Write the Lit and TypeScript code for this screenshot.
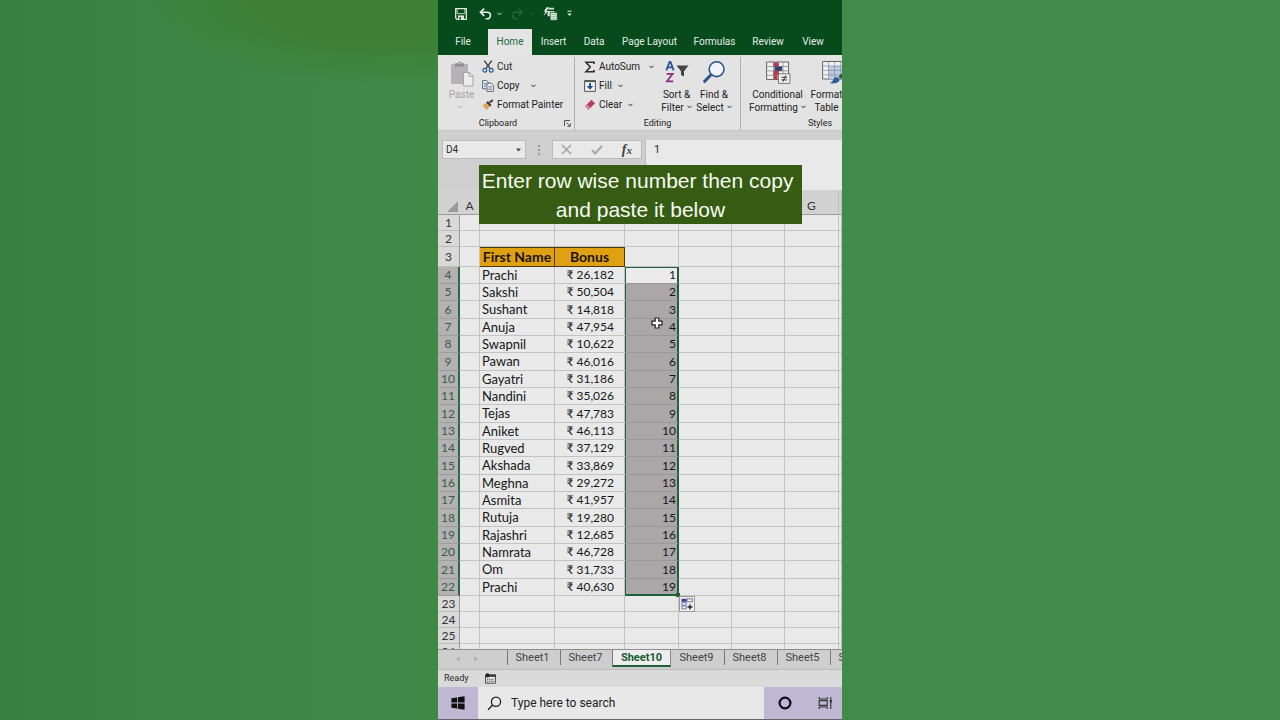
import { LitElement, html, css, svg, nothing } from "lit";
import { customElement, state } from "lit/decorators.js";
import { classMap } from "lit/directives/class-map.js";

const chevron = html`<svg class="chev" width="5" height="4" viewBox="0 0 5 4" aria-hidden="true">
  <path d="M.5 .8 2.5 2.8 4.5 .8" fill="none" stroke="currentColor" stroke-width="1" />
</svg>`;

const icon = (w: number, h: number, body: unknown) =>
  html`<svg width=${w} height=${h} viewBox="0 0 ${w} ${h}" aria-hidden="true">${body}</svg>`;

const icons = {
  save: icon(12, 12, svg`<path d="M.7 .7h10.6v10.6H1.9L.7 10.1z" fill="none" stroke="#dfe9e0" stroke-width="1.3"/>
    <path d="M2.2 1v4.6h7.6V1" fill="none" stroke="#dfe9e0" stroke-width=".8"/>
    <path d="M3 7.4h6v4H3z" fill="#dfe9e0"/><path d="M4.3 9h1.6v2.4H4.3z" fill="#084a1d"/>`),
  undo: icon(13, 12, svg`<path d="M2 4.2h6.2a3.3 3.3 0 0 1 0 6.6H6.6" fill="none" stroke="#e6efe7" stroke-width="1.6"/>
    <path d="M5.2 .6 1.5 4.2l3.7 3.6" fill="none" stroke="#e6efe7" stroke-width="1.7"/>`),
  redo: icon(13, 12, svg`<path d="M11 4.2H4.8a3.3 3.3 0 0 0 0 6.6h1.6" fill="none" stroke="#2a6339" stroke-width="1.4"/>
    <path d="M7.8 .8l3.5 3.4-3.5 3.4" fill="none" stroke="#2a6339" stroke-width="1.4"/>`),
  quick: icon(15, 14, svg`<path d="M3.6 .3 .8 4.6h1.8L.6 8.8 5.2 4H3.5L6 .3z" fill="#e6efe7"/>
    <path d="M5.6 .8h5.4v1.8h-6zM4.5 3.9h7v5.4h-7z" fill="#d3e0d6"/>
    <path d="M7.2 5.4h7v7.9h-7z" fill="#e6efe7" stroke="#084a1d" stroke-width=".7"/>
    <path d="M8.4 7.4h4.6M8.4 9.4h4.6M8.4 11.4h4.6" stroke="#7d9f86" stroke-width=".7"/>`),
  custom: icon(5, 7, svg`<path d="M.5 1.2h4" stroke="#e6efe7"/><path d="M.3 3.4h4.4L2.5 6z" fill="#e6efe7"/>`),
  paste: icon(24, 27, svg`<path d="M1 4h17v20H1z" fill="#b5b1b6"/>
    <path d="M5 3.2h2.2a2.4 2.4 0 0 1 4.6 0H14V6.6H5z" fill="#8f8c91"/><circle cx="9.5" cy="3.2" r=".9" fill="#e3e3e3"/>
    <path d="M13.5 12.5h6l3.5 3.6v9.9h-9.5z" fill="#ececec" stroke="#a7a3a8"/><path d="M19.2 12.7v3.8h3.8" fill="none" stroke="#a7a3a8"/>`),
  cut: icon(12, 13, svg`<path d="M2.2 .6 8.3 8.6M9.8 .6 3.7 8.6" stroke="#3f4245" stroke-width="1.5"/>
    <circle cx="2.8" cy="10.2" r="1.9" fill="none" stroke="#2d5e94" stroke-width="1.2"/>
    <circle cx="9.2" cy="10.2" r="1.9" fill="none" stroke="#2d5e94" stroke-width="1.2"/>`),
  copy: icon(12, 12, svg`<path d="M.6 .6h4l2 2v6.2h-6z" fill="#eee" stroke="#555b63" stroke-width=".9"/>
    <path d="M1.8 3.4h3M1.8 5h3M1.8 6.6h2" stroke="#3f6ea3" stroke-width=".7"/>
    <path d="M5 3.2h4.2l2.2 2.2v6H5z" fill="#f2f2f2" stroke="#555b63" stroke-width=".9"/>
    <path d="M6.3 6.4h3.6M6.3 8h3.6M6.3 9.6h3.6" stroke="#3f6ea3" stroke-width=".7"/>`),
  painter: icon(12, 12, svg`<path d="M.6 6 5 3.4 8 6.8 5 11C3.4 9.8 1.6 8.4 .6 6z" fill="#dfa55b"/>
    <path d="M4.2 3.4 6 2l3.6 4.2-1.7 1.4z" fill="#3d3a39"/><path d="M7.8 3.6 10.8 1" stroke="#3d3a39" stroke-width="2"/>`),
  sum: icon(12, 12, svg`<path d="M10 3V1.3H2L6.2 6 2 10.7h8V9" fill="none" stroke="#2f2f2f" stroke-width="1.6"/>`),
  fill: icon(12, 12, svg`<path d="M.6 .6h10.8v10.8H.6z" fill="#efefef" stroke="#555" stroke-width="1"/>
    <path d="M.6 1.4h10.8" stroke="#555" stroke-width="1.4"/><path d="M6 3v4.4" stroke="#1f4f8a" stroke-width="1.9"/>
    <path d="M2.8 6 6 9.8 9.2 6z" fill="#1f4f8a"/>`),
  clear: icon(12, 12, svg`<path d="M7.4 .8 11 4.2 4.6 10.8 1 7.2z" fill="#b8405f"/>
    <path d="M2.9 5.3 6.5 8.9 4.6 10.8 1 7.2z" fill="#d98aa0"/>`),
  sort: icon(24, 24, svg`<path d="M1.4 10.4 4.5 1.8h1l3.1 8.6M2.6 7.4h4.8" fill="none" stroke="#2c5697" stroke-width="1.8"/>
    <path d="M1.6 13.9h6L2 21.3h6.2" fill="none" stroke="#8a2f84" stroke-width="1.8"/>
    <path d="M11.5 5.5h12L19 11.2v5.4l-3-1.6v-3.8z" fill="#454545"/>`),
  find: icon(24, 24, svg`<circle cx="14.6" cy="9.2" r="7.4" fill="#f1f4f8" stroke="#2b538f" stroke-width="1.6"/>
    <path d="M9 14.8 1.8 22.2" stroke="#2b538f" stroke-width="3"/>`),
  conditional: icon(26, 24, svg`<path d="M1.6 2h22v17.5h-22z" fill="#f2f2f2" stroke="#666"/>
    <path d="M1.6 6.5h22M1.6 10.9h22M1.6 15.3h22M8.5 2v17.5M18 2v17.5" stroke="#8a8a8a" stroke-width=".8"/>
    <path d="M8.5 2.4h5.4v4H8.5zM8.5 10.9h5.4v4.2H8.5zM8.5 15.3h4v4h-4z" fill="#b23a4a"/><path d="M9.5 6.5h7.6v4.4H9.5z" fill="#33406f"/>
    <path d="M13.5 13.8h11.4v9.6H13.5z" fill="#f4f4f4" stroke="#777"/>
    <path d="M16.4 17.3h5.8M16.4 19.9h5.8M20.8 15.4l-3 6.4" stroke="#333" stroke-width="1"/>`),
  table: icon(28, 24, svg`<path d="M.6 1.5h24v17.5H.6z" fill="#f2f2f2" stroke="#666"/>
    <path d="M6.6 6h18v13h-18z" fill="#b8cce4"/><path d="M.6 6h24M.6 10.4h24M.6 14.8h24M6.6 1.5V19M12.6 1.5V19M18.6 1.5V19" stroke="#8a93a3" stroke-width=".8"/>
    <path d="M16.5 16.5 24 9.5l1.5 1.6-7 8z" fill="#484848"/><path d="M7.5 23c3-.6 3.4-2.4 4.4-4.4 2-2.4 6-1 5.6 1.4-.5 2.8-5.6 4.2-10 3z" fill="#2d5d9d"/>`),
  launcher: icon(7, 7, svg`<path d="M.5 6V.5H6" fill="none" stroke="#555"/><path d="M2.6 2.6 6 6M6.3 3.4v3H3.4" fill="none" stroke="#555"/>`),
  cancel: icon(11, 11, svg`<path d="M1 1l9 9M10 1 1 10" stroke="#a3a3a3" stroke-width="1.5"/>`),
  accept: icon(12, 10, svg`<path d="M1 5.2 4.2 8.4 11 1" fill="none" stroke="#a8a8a8" stroke-width="2.2"/>`),
  fillOptions: icon(12, 12, svg`<path d="M.5 .8h5v3h-5z" fill="#3b3f8c"/><path d="M6 .8h5.4v3H6z" fill="#f2f2f2" stroke="#3b3f8c" stroke-width=".7"/>
    <path d="M.8 4.6h4.4v2.6H.8zM.8 8h4.4v2.8H.8z" fill="#f2f2f2" stroke="#5b609c" stroke-width=".8"/>
    <path d="M9 6.4v5M6.5 8.9h5" stroke="#2a2a2a" stroke-width="1.5"/>`),
  cursor: icon(12, 12, svg`<path d="M4.2 1h3.6v3.2H11v3.6H7.8V11H4.2V7.8H1V4.2h3.2z" fill="#fff" stroke="#222" stroke-width="1.2"/>`),
  macro: icon(11, 11, svg`<path d="M.6 2.4h9.8v7.8H.6z" fill="#eee" stroke="#444"/><path d="M4 1.4h6.9v2.4H4z" fill="#333"/>
    <circle cx="2.4" cy="2.4" r="2.1" fill="#222"/><path d="M2 6.2h7M2 8.2h7" stroke="#444" stroke-width="1" stroke-dasharray="1.4 .7"/>`),
  windows: icon(14, 14, svg`<path d="M.4 2.2 6 1.4v5.2H.4zM6.8 1.3 13.6 .3v6.3H6.8zM.4 7.4H6v5.2L.4 11.8zM6.8 7.4h6.8v6.3l-6.8-1z" fill="#111"/>`),
  search: icon(15, 15, svg`<circle cx="9" cy="5.8" r="4.6" fill="none" stroke="#222" stroke-width="1.3"/>
    <path d="M5.7 9.1 1 13.8" stroke="#222" stroke-width="1.4"/>`),
  cortana: icon(14, 14, svg`<circle cx="7" cy="7" r="5.4" fill="none" stroke="#0d0d14" stroke-width="2.2"/>`),
  taskview: icon(15, 14, svg`<path d="M1.2 1v2h8V1M1.2 13v-2h8v2M1.2 4.6h8v4.8h-8z" fill="none" stroke="#333" stroke-width="1.1"/>
    <path d="M12.8 1v12" stroke="#333" stroke-width="1.1"/><path d="M11.8 4h2v2.6h-2z" fill="#333"/>`),
};

const ribbonTabs = ["File", "Home", "Insert", "Data", "Page Layout", "Formulas", "Review", "View"];

const people: [string, string][] = [
  ["Prachi", "26,182"], ["Sakshi", "50,504"], ["Sushant", "14,818"], ["Anuja", "47,954"],
  ["Swapnil", "10,622"], ["Pawan", "46,016"], ["Gayatri", "31,186"], ["Nandini", "35,026"],
  ["Tejas", "47,783"], ["Aniket", "46,113"], ["Rugved", "37,129"], ["Akshada", "33,869"],
  ["Meghna", "29,272"], ["Asmita", "41,957"], ["Rutuja", "19,280"], ["Rajashri", "12,685"],
  ["Namrata", "46,728"], ["Om", "31,733"], ["Prachi", "40,630"],
];

const sheets = ["Sheet1", "Sheet7", "Sheet10", "Sheet9", "Sheet8", "Sheet5", "Sheet4"];

const reset = css`
  * { box-sizing: border-box; }
  svg { display: block; flex: none; }
  button, input, textarea {
    font: inherit; color: inherit; background: none; border: 0; border-radius: 0;
    margin: 0; padding: 0; outline: none;
  }
  button { white-space: nowrap; }
`;

@customElement("excel-ribbon")
export class ExcelRibbon extends LitElement {
  @state() private active = "Home";

  static styles = [reset, css`
    :host { display: block; font: 10px/13px Roboto, "Open Sans", sans-serif; color: #222; }
    .title { display: flex; align-items: center; height: 29px; padding: 0 17px 2px; background: #074a1c; color: #dbe7dd; }
    .title button { display: flex; align-items: center; gap: 5px; margin-right: 9px; }
    .title .save { margin-right: 12px; }
    .title .faded { color: #2a6339; }
    .tabs { display: grid; grid-template-columns: 50px 44px 43px 38px 73px 57px 50px 40px; height: 26px; background: #074a1c; }
    .tab { color: #e3ede5; text-align: center; padding-bottom: 2px; }
    .tab.on { background: #e4e4e4; color: #1c6b3c; }
    .body { display: flex; height: 76px; background: #e3e3e3; border-bottom: 1px solid #c4c4c4; overflow: hidden; }
    .group { display: flex; flex-direction: column; flex: none; border-right: 1px solid #b0b0b0; margin: 2px 0 0; }
    .clip { width: 137px; }
    .edit { width: 166px; }
    .styles { width: 158px; border: 0; }
    .tools { display: flex; flex: none; height: 60px; }
    .caption { display: flex; justify-content: center; position: relative; height: 13px; font-size: 9px; }
    .clip .caption { padding-right: 16px; }
    .launch { position: absolute; right: 3px; top: 3px; }
    .big { display: flex; flex-direction: column; align-items: center; padding-top: 3px; }
    .big svg { margin-bottom: 4px; }
    .big .chev { display: inline; margin: 0 0 2px 3px; }
    .paste { width: 44px; color: #a6a2a7; padding-left: 3px; }
    .paste svg { margin-bottom: 1px; }
    .paste .chev { margin: 4px 3px 0 0; }
    .rows { display: flex; flex-direction: column; }
    .rows button { display: flex; align-items: center; height: 19px; gap: 3px; }
    .rows .chev { margin-left: 3px; }
    .copy .chev { margin-left: 8px; }
    .sum .chev { margin-left: 6px; }
    .edit .rows { padding-left: 9px; width: 83px; }
    .sort { width: 37px; }
    .find { width: 38px; }
    .cond { width: 73px; }
    .fmt { width: 25px; }
    .fmt svg { margin-left: 18px; }
  `];

  render() {
    return html`
      <div class="title">
        <button class="save" aria-label="Save">${icons.save}</button>
        <button aria-label="Undo">${icons.undo}${chevron}</button>
        <button class="faded" aria-label="Redo">${icons.redo}${chevron}</button>
        <button aria-label="Quick tools">${icons.quick}</button>
        <button aria-label="Customize toolbar">${icons.custom}</button>
      </div>
      <div class="tabs" role="tablist">
        ${ribbonTabs.map((t) => html`<button role="tab" class=${classMap({ tab: true, on: t === this.active })}
          aria-selected=${t === this.active} @click=${() => (this.active = t)}>${t}</button>`)}
      </div>
      <div class="body">
        <div class="group clip">
          <div class="tools">
            <button class="big paste">${icons.paste}<span>Paste</span>${chevron}</button>
            <div class="rows">
              <button>${icons.cut}Cut</button>
              <button class="copy">${icons.copy}Copy${chevron}</button>
              <button>${icons.painter}Format Painter</button>
            </div>
          </div>
          <div class="caption">Clipboard<button class="launch" aria-label="Clipboard options">${icons.launcher}</button></div>
        </div>
        <div class="group edit">
          <div class="tools">
            <div class="rows">
              <button class="sum">${icons.sum}AutoSum${chevron}</button>
              <button>${icons.fill}Fill${chevron}</button>
              <button>${icons.clear}Clear${chevron}</button>
            </div>
            <button class="big sort">${icons.sort}<span>Sort &amp;</span><span>Filter${chevron}</span></button>
            <button class="big find">${icons.find}<span>Find &amp;</span><span>Select${chevron}</span></button>
          </div>
          <div class="caption">Editing</div>
        </div>
        <div class="group styles">
          <div class="tools">
            <button class="big cond">${icons.conditional}<span>Conditional</span><span>Formatting${chevron}</span></button>
            <button class="big fmt">${icons.table}<span>Format</span><span>Table</span></button>
          </div>
          <div class="caption">Styles</div>
        </div>
      </div>`;
  }
}

@customElement("excel-grid")
export class ExcelGrid extends LitElement {
  static styles = [reset, css`
    :host { display: block; overflow: hidden; background: #e9e9e9; font: 13px/16px Lato, "Open Sans", sans-serif; color: #161616; }
    table { width: 100%; table-layout: fixed; border-collapse: separate; border-spacing: 0; }
    .c-head { width: 22px; } .c-a { width: 20px; } .c-b { width: 75px; } .c-c { width: 70px; } .c-d { width: 54px; } .c-e { width: 53px; }
    th, td { padding: 0; height: 16px; line-height: 15px; font-weight: 400; white-space: nowrap; overflow: hidden;
      border-right: 1px solid #c3c3c3; border-bottom: 1px solid #c3c3c3; }
    thead th { height: 25px; background: #d2d2d2; vertical-align: bottom; line-height: 16px; font-size: 12px;
      border-bottom-color: #9c9c9c; border-right-color: #bdbdbd; color: #333; }
    thead .corner { padding: 0 2px 2px 9px; border-right-color: #d2d2d2; }
    tbody th { background: #d9d9d9; color: #333; font-size: 12px; border-right-color: #9c9c9c; border-bottom-color: #bdbdbd; }
    .tall td, .tall th { height: 20px; line-height: 19px; }
    .tall .field { line-height: 18px; }
    .data td, .data th { height: 17px; line-height: 16px; }
    .data:nth-child(3n) td, .data:nth-child(3n) th { height: 18px; line-height: 17px; }
    .data th { background: #b3b1b2; border-right: 2px solid #2a6a45; color: #3d5a48; border-bottom-color: #9d9d9d; }
    .name { padding-left: 2px; }
    .money { font-size: 12px; text-align: right; padding-right: 10px; }
    .field { background: #dfa012; border: 1px solid #4a3a14; border-left-width: 0; font-weight: 700; font-size: 14px; text-align: center; color: #1a1407; }
    .seq { font-size: 12px; text-align: right; padding-right: 1px; background: #aba7a8; border-right: 2px solid #1f6038;
      border-bottom-color: #9b9799; box-shadow: inset 1px 0 #1f6038; }
    .first .seq { background: #ececec; box-shadow: inset 1px 1px #1f6038; }
    .data.last .seq { border-bottom: 2px solid #1f6038; overflow: visible; position: relative; line-height: 15px; }
    .handle { position: absolute; right: -3px; bottom: -3px; width: 4px; height: 4px; background: #1f6038; }
    .options { position: absolute; left: 54px; top: 17px; width: 16px; height: 16px; padding: 1px; background: #efefef; border: 1px solid #9a9a9a; }
    .hover { overflow: visible; position: relative; }
    .pointer { position: absolute; left: 26px; top: -2px; }
  `];

  private blanks(n: number) {
    return Array.from({ length: n }, () => html`<td></td>`);
  }

  private blankRow(n: number) {
    return html`<tr><th scope="row">${n}</th>${this.blanks(8)}</tr>`;
  }

  render() {
    const last = people.length - 1;
    return html`
      <table>
        <colgroup>
          <col class="c-head" /><col class="c-a" /><col class="c-b" /><col class="c-c" /><col class="c-d" />
          <col class="c-e" /><col class="c-e" /><col class="c-d" /><col />
        </colgroup>
        <thead>
          <tr>
            <th class="corner">${icon(11, 11, svg`<path d="M11 0v11H0z" fill="#9b9b9b"/>`)}</th>
            <th scope="col">A</th><th></th><th></th><th></th><th></th><th></th><th scope="col">G</th><th></th>
          </tr>
        </thead>
        <tbody>
          ${this.blankRow(1)}${this.blankRow(2)}
          <tr class="tall">
            <th scope="row">3</th><td></td><td class="field">First Name</td><td class="field">Bonus</td>${this.blanks(5)}
          </tr>
          ${people.map(([name, bonus], i) => html`
            <tr class=${classMap({ data: true, first: i === 0, last: i === last })}>
              <th scope="row">${i + 4}</th><td></td>
              <td class="name">${name}</td>
              <td class="money">₹ ${bonus}</td>
              <td class=${classMap({ seq: true, hover: i === 3 })}>${i + 1}${i === 3
                ? html`<span class="pointer">${icons.cursor}</span>` : nothing}${i === last
                ? html`<span class="handle"></span><button class="options" aria-label="Auto fill options">${icons.fillOptions}</button>` : nothing}</td>
              ${this.blanks(4)}
            </tr>`)}
          ${[23, 24, 25, 26].map((n) => this.blankRow(n))}
        </tbody>
      </table>`;
  }
}

@customElement("app-root")
export class AppRoot extends LitElement {
  @state() private sheet = "Sheet10";

  static styles = [reset, css`
    :host {
      display: flex; justify-content: center; height: 100vh; overflow: hidden;
      font: 10px/13px Roboto, "Open Sans", sans-serif; color: #2c2c2c;
      background:
        radial-gradient(ellipse 18% 12% at 29% 0, #3d7f33 45%, #3d7f3300 100%),
        linear-gradient(90deg, #37803f 0, #40884a 26%, #3f8846 34%, #438b4b 75%);
    }
    .window { display: flex; flex-direction: column; position: relative; width: 100%; max-width: 404px; background: #d0d0d0; }
    .formula { display: flex; height: 59px; padding: 9px 0 0 4px; background: #cfcfcf; }
    .namebox { display: flex; align-items: center; width: 84px; height: 19px; padding: 0 4px 0 3px; background: #e9e9e9; border: 1px solid #bbb; }
    .namebox input { width: 100%; }
    .grip { width: 26px; height: 19px; padding: 5px 12px; }
    .actions { display: flex; align-items: center; justify-content: space-between; width: 90px; height: 19px; padding: 0 9px 0 8px; background: #e9e9e9; border: 1px solid #bbb; }
    .fx { font: italic 700 14px/16px "Liberation Serif", serif; color: #444; }
    .fx small { font-size: 11px; }
    .value { flex: 1; min-width: 0; margin-left: 3px; height: 50px; padding: 3px 8px; resize: none; overflow: hidden; background: #e9e9e9; border-left: 1px solid #bbb; font-size: 11px; }
    .banner { position: absolute; left: 41px; right: 40px; top: 165px; margin: 0; padding-top: 1px; height: 59px; background: #355c12;
      color: #f7fbf2; font: 21px/29px "Liberation Sans", Arial, sans-serif; text-align: center; }
    .grid { flex: 1; min-height: 0; }
    .sheets { display: flex; height: 20px; border-top: 1px solid #8e8e8e; background: #cecece; font-size: 11px; overflow: hidden; }
    .nav { display: flex; align-items: center; gap: 14px; width: 69px; padding: 0 0 2px 18px; flex: none; }
    .sheet { flex: none; width: 53px; height: 15px; padding-right: 3px; border-left: 1px solid #777; color: #444; }
    .sheet.on { width: 59px; height: 17px; margin-left: -1px; padding: 0; font-weight: 700; color: #175c31; background: #ededed; border-bottom: 2px solid #1f6038; border-right: 1px solid #888; }
    .sheet.on + .sheet { border-left-color: transparent; }
    .status { display: flex; align-items: center; gap: 16px; height: 18px; padding: 0 6px 1px; background: #dadada; border-top: 1px solid #bbb; font-size: 9px; }
    .taskbar { display: flex; height: 33px; background: #beb8d5; border-bottom: 1px solid #666; }
    .start { width: 40px; padding-left: 13px; }
    .search { display: flex; align-items: center; flex: 1; min-width: 0; gap: 9px; padding-left: 9px; background: #e8e8e8; font: 12px/16px Roboto, "Open Sans", sans-serif; }
    .search input { width: 100%; }
    .search input::placeholder { color: #222; opacity: 1; }
    .tray { display: flex; align-items: center; gap: 26px; width: 78px; padding-left: 14px; }
  `];

  render() {
    return html`
      <main class="window">
        <excel-ribbon></excel-ribbon>
        <div class="formula">
          <label class="namebox"><input aria-label="Name box" value="D4" />
            ${icon(5, 4, svg`<path d="M0 .5h5L2.5 3.5z" fill="#444"/>`)}</label>
          <div class="grip">${icon(2, 10, svg`<path d="M0 0h2v2H0zM0 4h2v2H0zM0 8h2v2H0z" fill="#9a9a9a"/>`)}</div>
          <div class="actions">
            <button aria-label="Cancel">${icons.cancel}</button>
            <button aria-label="Enter">${icons.accept}</button>
            <button class="fx" aria-label="Insert function">f<small>x</small></button>
          </div>
          <textarea class="value" aria-label="Formula bar" .value=${"1"}></textarea>
        </div>
        <excel-grid class="grid"></excel-grid>
        <div class="sheets" role="tablist">
          <div class="nav">
            ${icon(4, 6, svg`<path d="M3.5 .5v5L.5 3z" fill="#aaa"/>`)}
            ${icon(4, 6, svg`<path d="M.5 .5v5l3-2.5z" fill="#aaa"/>`)}
          </div>
          ${sheets.map((s) => html`<button role="tab" class=${classMap({ sheet: true, on: s === this.sheet })}
            aria-selected=${s === this.sheet} @click=${() => (this.sheet = s)}>${s}</button>`)}
        </div>
        <div class="status"><span>Ready</span>${icons.macro}</div>
        <div class="taskbar">
          <button class="start" aria-label="Start">${icons.windows}</button>
          <label class="search">${icons.search}<input aria-label="Search" placeholder="Type here to search" /></label>
          <div class="tray"><button aria-label="Cortana">${icons.cortana}</button><button aria-label="Task view">${icons.taskview}</button></div>
        </div>
        <p class="banner">Enter row wise number then copy&nbsp;<br />and paste it below</p>
      </main>`;
  }
}
